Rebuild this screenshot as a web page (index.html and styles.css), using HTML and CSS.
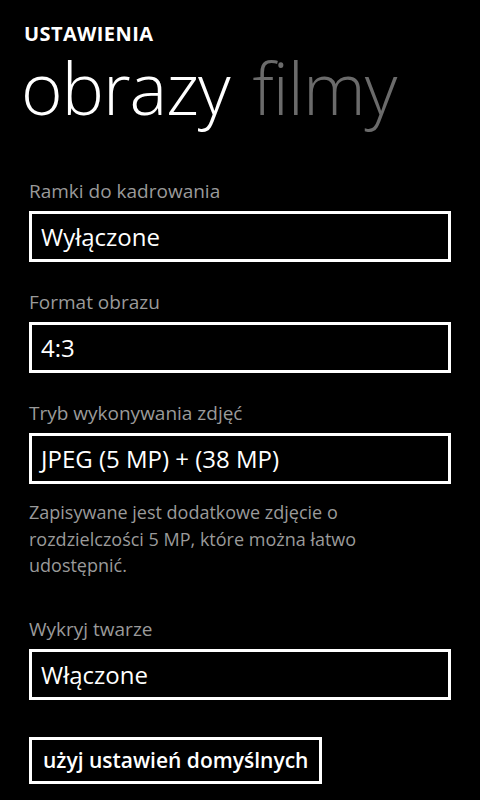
FILE: index.html
```html
<!DOCTYPE html>
<html lang="pl">
<head>
<meta charset="utf-8">
<link rel="stylesheet" href="styles.css">
</head>
<body>
<div class="page">
  <header class="header">
    <div class="app-title">USTAWIENIA</div>
    <div class="pivot">
      <span class="pivot-item active">obrazy</span>
      <span class="pivot-item">filmy</span>
    </div>
  </header>
  <main class="content">
    <section class="field">
      <div class="label">Ramki do kadrowania</div>
      <div class="box">Wyłączone</div>
    </section>
    <section class="field">
      <div class="label">Format obrazu</div>
      <div class="box">4:3</div>
    </section>
    <section class="field">
      <div class="label">Tryb wykonywania zdjęć</div>
      <div class="box">JPEG (5 MP) + (38 MP)</div>
      <p class="desc">Zapisywane jest dodatkowe zdjęcie o rozdzielczości 5 MP, które można łatwo udostępnić.</p>
    </section>
    <section class="field">
      <div class="label">Wykryj twarze</div>
      <div class="box">Włączone</div>
    </section>
    <div class="actions">
      <button class="btn">użyj ustawień domyślnych</button>
    </div>
  </main>
</div>
</body>
</html>
```
FILE: styles.css
```css
html, body {
  margin: 0;
  padding: 0;
  background: #000;
}
body {
  width: 480px;
  height: 800px;
  overflow: hidden;
  color: #fff;
  font-family: "Open Sans", "Noto Sans", sans-serif;
}
.header {
  padding: 22px 0 0 24px;
}
.app-title {
  font-size: 20px;
  font-weight: 700;
  line-height: 24px;
  letter-spacing: 0.4px;
}
.pivot {
  display: flex;
  gap: 23px;
  margin-left: -3px;
  font-size: 71px;
  font-weight: 300;
  line-height: 84px;
  letter-spacing: -1px;
  white-space: nowrap;
}
.pivot-item {
  color: #6b6b6b;
}
.pivot-item.active {
  color: #fff;
}
.content {
  padding: 49px 29px 0 29px;
  width: 422px;
}
.field {
  margin-bottom: 28px;
}
.label {
  font-size: 19px;
  line-height: 24px;
  color: #9a9a9a;
  margin-bottom: 8px;
}
.box {
  box-sizing: border-box;
  height: 51px;
  border: 3px solid #fff;
  padding: 0 9px;
  font-size: 24px;
  line-height: 45px;
  color: #fff;
  white-space: nowrap;
}
.desc {
  margin: 15px 0 0 0;
  padding-bottom: 10px;
  font-size: 18px;
  line-height: 26.5px;
  color: #9a9a9a;
}
.actions {
  padding-top: 9px;
}
.btn {
  box-sizing: border-box;
  height: 47px;
  padding: 0 11px;
  border: 3px solid #fff;
  border-radius: 0;
  background: #000;
  color: #fff;
  font-family: inherit;
  font-size: 21px;
  font-weight: 600;
  line-height: 41px;
}
```
